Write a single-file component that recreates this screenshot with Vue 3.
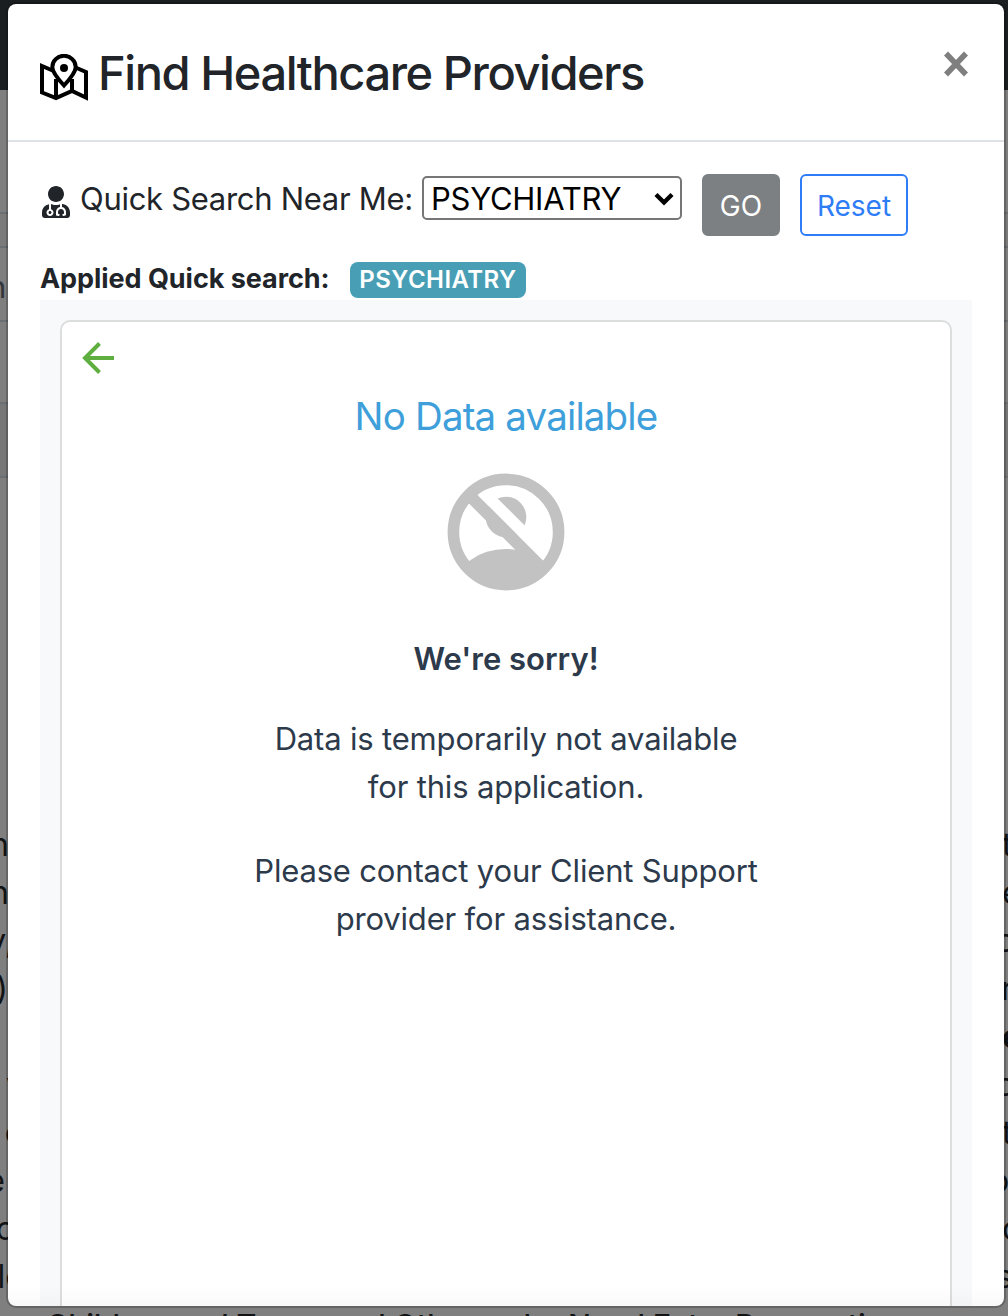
<script setup>
import { ref } from 'vue'

const specialty = ref('PSYCHIATRY')
const pageRows = [
  { left: 'n', end: 9, right: 't', start: 0 },
  { left: 'n', end: 9, right: 'e', start: 0 },
  { left: 'y,', end: 14, right: 'o', start: -6 },
  { left: ')', end: 8, right: 'r', start: -1 },
  { left: '', end: 8, right: 'e', start: 0, strong: true },
  { left: 'v', end: 24, right: 'o', start: -6 },
  { left: 'c', end: 23, right: 't', start: 0 },
  { left: 'e', end: 5, right: 'o', start: -12 },
  { left: 'c', end: 14, right: 'c', start: 0 },
  { left: 'le', end: 24, right: 's', start: -6 },
]
</script>

<template>
  <div class="page">
    <div class="navbar"></div>
    <div class="table">
      <div class="cell c1"></div>
      <div class="cell c2"></div>
      <div class="cell c3"><span>n</span></div>
      <div class="cell c4"></div>
      <div class="cell c5"></div>
    </div>
    <div class="copy">
      <div v-for="(row, i) in pageRows" :key="i" class="copy-row">
        <span class="left"><span class="word" :style="{ width: row.end + 'px' }">{{ row.left }}</span></span>
        <span class="right" :class="{ strong: row.strong }"><span :style="{ marginLeft: row.start + 'px' }">{{ row.right }}</span></span>
      </div>
      <div class="heading">Children and Teens and Others who Need Extra Preparation</div>
    </div>

    <section class="modal">
      <header class="modal-head">
        <svg class="map" viewBox="0 0 48 48" fill="none" stroke="#000" stroke-width="4">
          <path d="M12.5 16.5 2 12v26.5L16 44l16-7 14 6.500V18L35.500 13.500" />
          <path d="M16 25v19M32 25v12" />
          <path d="M24 31.500C18 25 12.300 18.500 12.300 13a11.700 11.200 0 0 1 23.400 0c0 5.500-5.700 12-11.700 18.500z" />
          <circle cx="24" cy="14" r="4" fill="#000" stroke="none" />
        </svg>
        <h1>Find Healthcare Providers</h1>
        <button class="close" aria-label="Close">
          <svg viewBox="0 0 24 26"><path d="M2 2.500 22 23.500M22 2.500 2 23.500" stroke="#7f7f7f" stroke-width="5.600" /></svg>
        </button>
      </header>

      <div class="modal-body">
        <div class="search">
          <svg class="doctor" viewBox="0 0 448 512">
            <path fill="#212529" d="M224 256c70.7 0 128-57.3 128-128S294.7 0 224 0 96 57.3 96 128s57.3 128 128 128zM104 424c0 13.3 10.7 24 24 24s24-10.7 24-24-10.7-24-24-24-24 10.7-24 24zm216-135.4v49c36.5 7.4 64 39.8 64 78.4v41.7c0 7.6-5.4 14.2-12.9 15.7l-32.2 6.4c-4.3.9-8.5-1.9-9.4-6.3l-3.1-15.7c-.9-4.3 1.9-8.6 6.3-9.4l19.3-3.9V416c0-62.8-96-65.1-96 1.9v26.7l19.3 3.9c4.3.9 7.1 5.1 6.3 9.4l-3.1 15.7c-.9 4.3-5.1 7.1-9.4 6.3l-31.2-4.2c-7.9-1.1-13.8-7.8-13.8-15.9V416c0-38.6 27.5-70.9 64-78.4v-45.2c-2.2.7-4.4 1.1-6.6 1.9-18 6.3-37.3 9.8-57.4 9.8s-39.4-3.5-57.4-9.8c-7.4-2.6-14.9-4.2-22.6-5.2v81.6c23.1 6.9 40 28.1 40 53.4 0 30.9-25.1 56-56 56s-56-25.1-56-56c0-25.3 16.9-46.5 40-53.4v-80.4C48.5 301 0 355.8 0 422.4v44.8C0 491.9 20.1 512 44.8 512h358.4c24.7 0 44.8-20.1 44.8-44.8v-44.8c0-72-56.8-130.3-128-133.8z" />
          </svg>
          <span class="label">Quick Search Near Me:</span>
          <div class="select">
            <span>{{ specialty }}</span>
            <svg viewBox="0 0 20 14"><path d="M2 2.500 10 10.500 18 2.500" fill="none" stroke="#000" stroke-width="4.400" /></svg>
          </div>
          <button class="btn go">GO</button>
          <button class="btn reset">Reset</button>
        </div>

        <div class="applied">
          <strong>Applied Quick search:</strong>
          <span class="badge">{{ specialty }}</span>
        </div>

        <div class="results">
          <div class="card">
            <svg class="back" viewBox="0 0 32 32" fill="none" stroke="#5eae40" stroke-width="4">
              <path d="M32 16H3M17.500 1.500 3 16l14.500 14.500" />
            </svg>
            <h2>No Data available</h2>
            <svg class="nobody" viewBox="-0.5 -0.5 118 118">
              <defs>
                <clipPath id="disc"><circle cx="58.500" cy="58.500" r="52" /></clipPath>
              </defs>
              <g clip-path="url(#disc)" fill="#c2c2c2">
                <circle cx="58.500" cy="43.500" r="20.300" />
                <ellipse cx="58.500" cy="113" rx="50" ry="37.500" />
                <path d="M20 3.200 114 97.200" stroke="#fff" stroke-width="11.800" />
                <path d="M14 14 104 104" stroke="#c2c2c2" stroke-width="12" />
              </g>
              <circle cx="58.500" cy="58.500" r="52.600" fill="none" stroke="#c2c2c2" stroke-width="11.600" />
            </svg>
            <p class="sorry">We're sorry!</p>
            <p class="msg m1">Data is temporarily not available<br />for this application.</p>
            <p class="msg m2">Please contact your Client Support<br />provider for assistance.</p>
          </div>
        </div>
      </div>
    </section>
  </div>
</template>

<style>
body { overflow: hidden; }
</style>

<style scoped>
* { box-sizing: border-box; }
.page {
  position: relative; width: 1008px; height: 1316px; overflow: hidden;
  background: #7f7f7f; color: #212529; font: 31px/48px Inter, sans-serif;
}
h1, h2, p { margin: 0; }
svg { display: block; flex: none; }
button { padding: 0; font-family: inherit; }
.navbar { height: 90px; background: #1a1e21; }
.table { height: 738px; }
.cell { border-bottom: 2px solid #6b6f72; overflow: hidden; }
.c1 { height: 124px; }
.c2 { height: 34px; background: #7b7b7b; }
.c3 { height: 74px; line-height: 78px; }
.c3 span { margin-left: -12px; color: #32363a; }
.c4 { height: 82px; }
.c5 { height: 74px; background: #777; }
.copy-row { display: flex; justify-content: space-between; height: 48px; line-height: 34px; font-size: 32px; color: #111315; }
.left { display: flex; width: 8px; overflow: hidden; }
.word { display: flex; justify-content: flex-end; flex: none; }
.right { width: 6px; display: flex; overflow: hidden; }
.strong { font-weight: 700; }
.heading {
  padding-left: 46px; font-size: 30.5px; line-height: 33px; font-weight: 500; letter-spacing: -.2px;
  color: #111315; white-space: nowrap;
}

.modal {
  position: absolute; left: 6px; top: 2px; width: 1000px; height: 1306px; overflow: hidden;
  background: #fff; background-clip: padding-box; border: 2px solid rgba(0, 0, 0, .2); border-radius: 10px;
}
.modal::after {
  content: ""; position: absolute; left: 0; right: 0; bottom: 0; height: 20px;
  background: linear-gradient(rgba(0, 0, 0, 0), rgba(0, 0, 0, .025));
}
.modal-head { display: flex; height: 138px; padding: 0 36px 0 32px; border-bottom: 2px solid #dee2e6; }
.map { width: 48px; height: 48px; margin-top: 50px; }
h1 { margin: 40px 0 0 10px; font-size: 47px; line-height: 58px; font-weight: 500; letter-spacing: -1.43px; white-space: nowrap; }
.close { margin: 47px 0 0 auto; width: 24px; height: 26px; border: 0; background: none; }
.close svg { width: 24px; height: 26px; }
.modal-body { padding: 32px; }
.search { display: flex; height: 62px; }
.doctor { width: 28px; height: 32px; margin: 12px 10px 0 2px; }
.label { width: 342px; line-height: 49px; letter-spacing: -.3px; white-space: nowrap; }
.select {
  display: flex; justify-content: space-between; align-items: center; width: 260px; height: 44px; margin-top: 2px;
  padding: 1px 6px 0 7px; border: 2px solid #767676; border-radius: 5px; color: #000; line-height: 40px;
  letter-spacing: -.25px;
}
.select svg { width: 20px; height: 14px; }
.btn { height: 62px; margin-left: 20px; border-radius: 6px; font-size: 28px; line-height: 58px; }
.go { width: 78px; padding-top: 1px; border: 2px solid #7c8083; background: #7c8083; color: #fff; }
.reset { width: 108px; padding-top: 1px; border: 2px solid #2f7df6; background: #fff; color: #2f7df6; }
.applied { display: flex; height: 64px; padding-top: 26px; }
.applied strong { width: 310px; font-size: 27px; line-height: 34px; letter-spacing: -.05px; white-space: nowrap; }
.badge {
  width: 176px; height: 36px; border-radius: 8px; background: #489fb5; color: #fff;
  font-size: 24px; line-height: 36px; font-weight: 600; letter-spacing: .45px; text-align: center; white-space: nowrap;
}
.results { width: 932px; height: 1010px; padding: 20px; background: #f8f9fb; }
.card { height: 1010px; padding: 20px; border: 2px solid #dcdddd; border-radius: 10px; background: #fff; text-align: center; color: #2c3a4b; }
.back { width: 32px; height: 32px; }
h2 { margin-top: 12px; font-size: 38.5px; line-height: 60px; font-weight: 400; letter-spacing: -.85px; color: #3e9fdb; }
.nobody { width: 118px; height: 118px; margin: 27px 0 0 365px; }
.sorry { margin-top: 44px; font-weight: 600; }
.msg { letter-spacing: -.17px; }
.m1 { margin-top: 32px; }
.m2 { margin-top: 36px; }
</style>
